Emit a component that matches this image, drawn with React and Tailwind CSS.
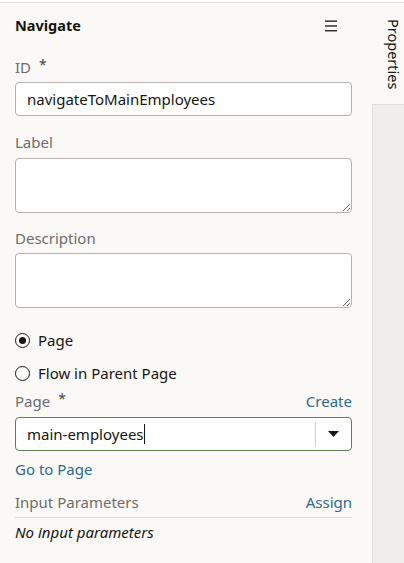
import React from "react";

function Hamburger() {
  return (
    <svg width="12" height="12" viewBox="0 0 12 12" className="block">
      <rect x="0" y="0.5" width="12" height="1.3" fill="#161513" />
      <rect x="0" y="5.3" width="12" height="1.3" fill="#161513" />
      <rect x="0" y="10.1" width="12" height="1.3" fill="#161513" />
    </svg>
  );
}

function Label({ children, required }) {
  return (
    <div className="h-[20px] leading-[20px] text-[15px] text-[#6f6c69] flex">
      <span>{children}</span>
      {required && (
        <span className="ml-[8px] text-[14px] leading-[14px] text-[#4a4745] mt-[1px]">*</span>
      )}
    </div>
  );
}

function Radio({ checked, children, className }) {
  return (
    <div className={"h-[24px] flex items-center " + className}>
      <div className="w-[15px] h-[15px] rounded-full border-[1.5px] border-[#161513] flex items-center justify-center bg-white">
        {checked && <div className="w-[7px] h-[7px] rounded-full bg-[#161513]" />}
      </div>
      <span className="ml-[8px] text-[15px] text-[#161513] leading-[20px]">{children}</span>
    </div>
  );
}

export default function App() {
  return (
    <div
      className="w-[404px] h-[563px] bg-white pt-[2px] flex flex-col overflow-hidden"
      style={{ fontFamily: '"Noto Sans", "Open Sans", sans-serif' }}
    >
      <div className="flex flex-1 border-t border-[#e3e2e0]">
        <div className="w-[372px] bg-[#faf9f8] pl-[15px] pr-[20px] flex flex-col">
          <div className="h-[45px] flex items-center justify-between">
            <span className="text-[14.5px] font-bold text-[#161513]">Navigate</span>
            <div className="mr-[15px]">
              <Hamburger />
            </div>
          </div>

          <div className="mt-[9px]">
            <Label required>ID</Label>
          </div>
          <input
            readOnly
            value="navigateToMainEmployees"
            className="mt-[5px] h-[34px] w-[337px] rounded-[4px] border border-[#b5b3b0] bg-white px-[11px] text-[15px] text-[#161513] outline-none"
          />

          <div className="mt-[16px]">
            <Label>Label</Label>
          </div>
          <textarea
            readOnly
            className="mt-[6px] h-[55px] w-[337px] rounded-[4px] border border-[#b5b3b0] bg-white outline-none block"
          />

          <div className="mt-[15px]">
            <Label>Description</Label>
          </div>
          <textarea
            readOnly
            className="mt-[5px] h-[55px] w-[337px] rounded-[4px] border border-[#b5b3b0] bg-white outline-none block"
          />

          <Radio checked className="mt-[20px]">Page</Radio>
          <Radio className="mt-[9px]">Flow in Parent Page</Radio>

          <div className="mt-[6px] flex w-[337px] justify-between items-center">
            <Label required>Page</Label>
            <span className="text-[15px] leading-[20px] text-[#2f6a8c]">Create</span>
          </div>

          <div className="mt-[6px] h-[34px] w-[337px] rounded-[4px] border border-[#5f7f4c] bg-white flex items-center">
            <div className="flex-1 pl-[11px] flex items-center text-[15px] text-[#161513]">
              <span>main-employees</span>
              <span className="w-[1px] h-[20px] bg-[#161513]" />
            </div>
            <div className="w-[1px] h-[25px] bg-[#cfcdca]" />
            <div className="w-[35px] flex items-center justify-center">
              <svg width="11" height="6" viewBox="0 0 11 6">
                <path d="M0 0 H11 L5.5 6 Z" fill="#161513" />
              </svg>
            </div>
          </div>

          <div className="mt-[8px] h-[20px] leading-[20px] text-[15px] text-[#2f6a8c]">Go to Page</div>

          <div className="mt-[13px] flex w-[337px] justify-between h-[20px] leading-[20px] text-[15px]">
            <span className="text-[#6f6c69]">Input Parameters</span>
            <span className="text-[#2f6a8c]">Assign</span>
          </div>
          <div className="mt-[5px] w-[337px] border-t border-[#dedcda]" />
          <div className="mt-[4px] h-[20px] leading-[20px] text-[15px] italic text-[#161513]">
            No input parameters
          </div>
        </div>

        <div className="w-[32px] flex flex-col">
          <div className="h-[101px] bg-[#faf9f8] flex justify-center pl-[11px] pt-[16px]">
            <span
              className="text-[14.5px] text-[#161513] leading-[16px]"
              style={{ writingMode: "vertical-rl" }}
            >
              Properties
            </span>
          </div>
          <div className="flex-1 bg-[#efeeec] border-t border-l border-[#dfdedc]" />
        </div>
      </div>
    </div>
  );
}
